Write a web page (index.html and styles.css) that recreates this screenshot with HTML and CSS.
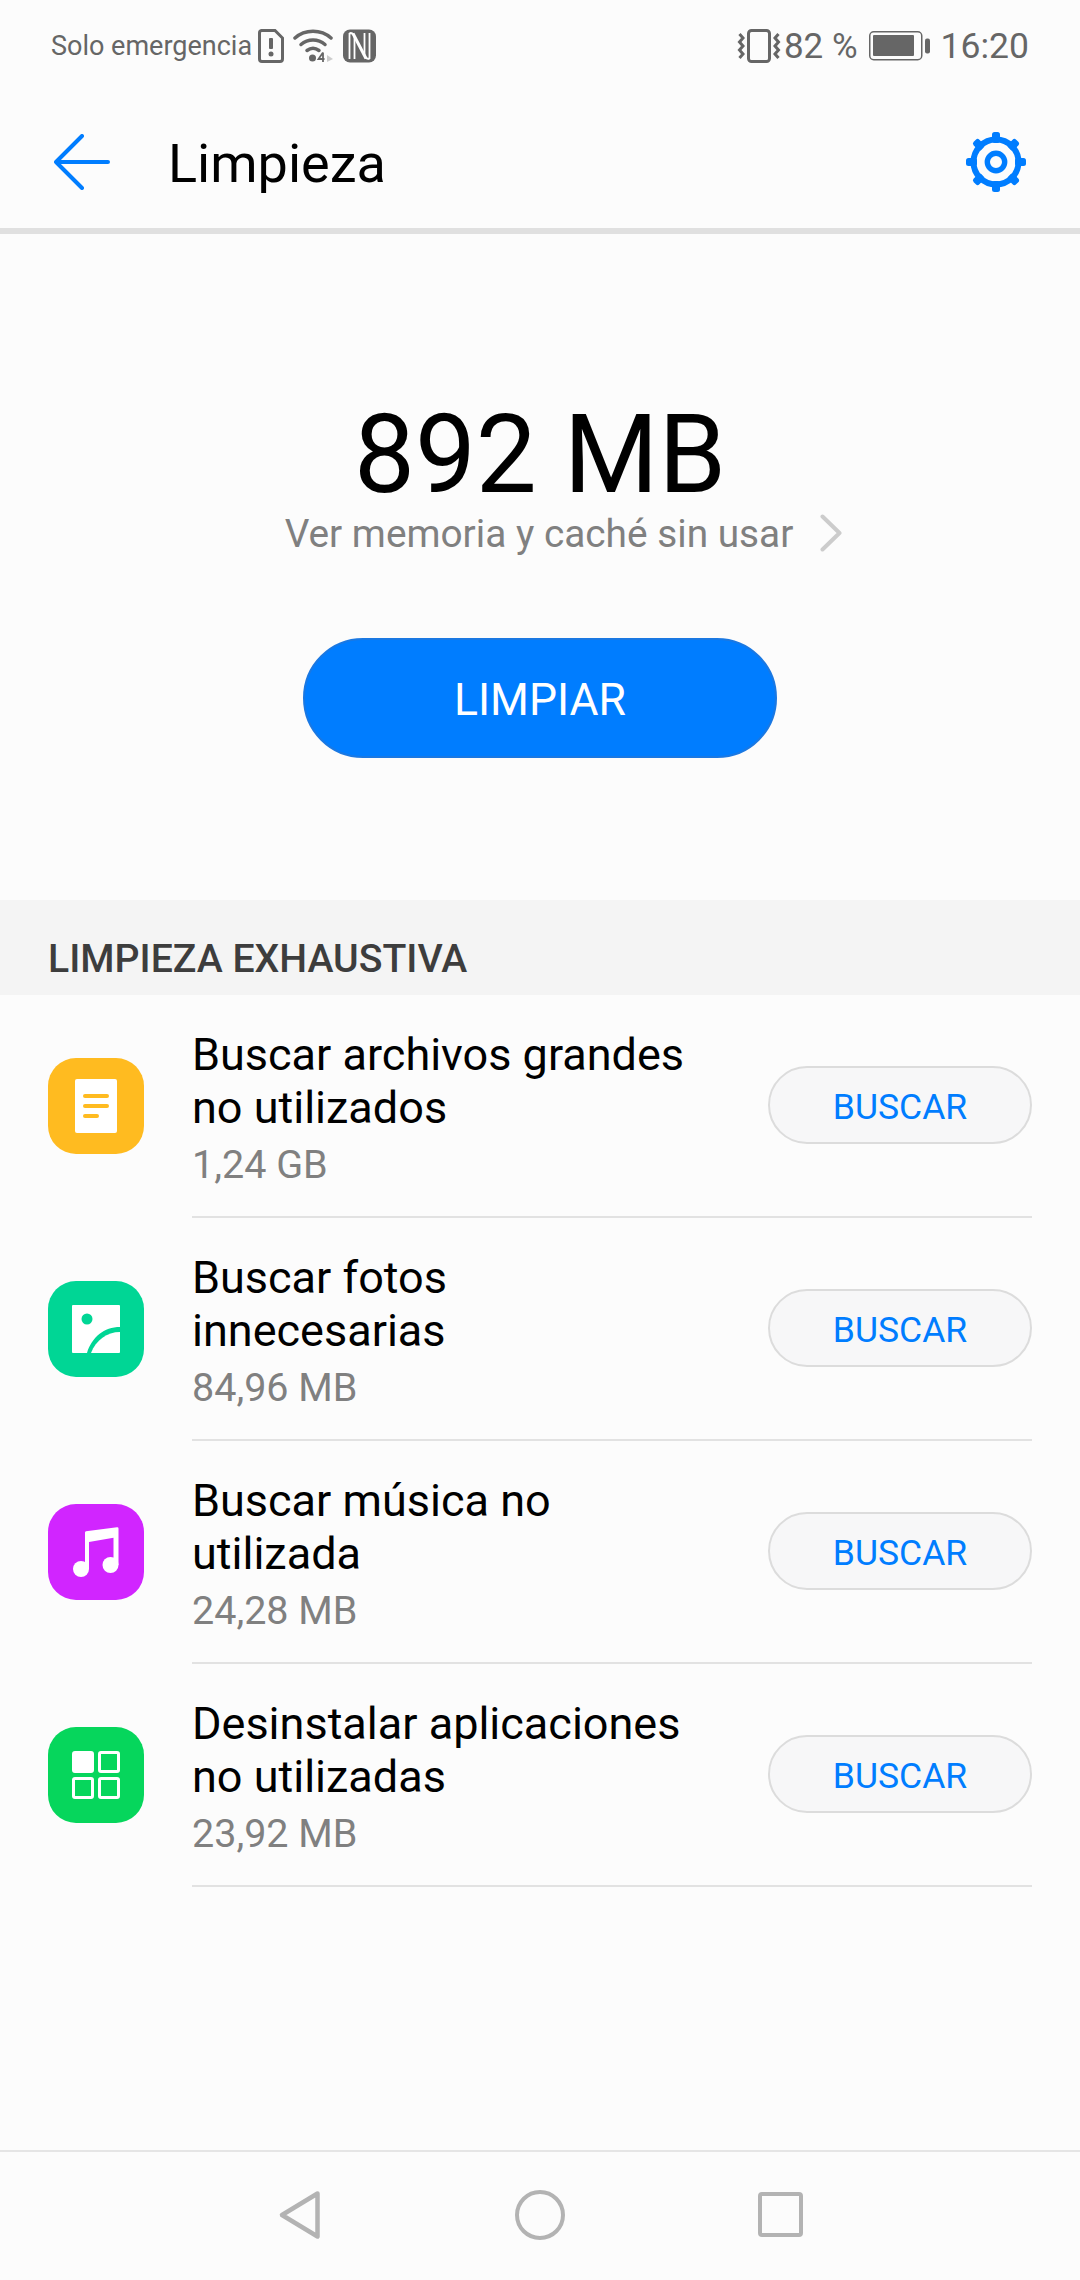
FILE: index.html
```html
<!DOCTYPE html>
<html lang="es">
<head>
    <meta charset="UTF-8">
    <meta name="viewport" content="width=device-width, initial-scale=1.0">
    <title>Limpieza</title>
    <link rel="stylesheet" href="styles.css">
</head>
<body>
    <div class="phone">
        <div class="status-bar">
            <div class="status-left">
                <span class="carrier">Solo emergencia</span>
                <svg class="ic-sim" width="26" height="34" viewBox="0 0 26 34"><path d="M3.500 1.500H17L24.500 9V30a2.500 2.500 0 0 1-2.500 2.500H4A2.500 2.500 0 0 1 1.500 30V4A2.500 2.500 0 0 1 3.500 1.500Z" fill="none" stroke="#666" stroke-width="3"/><rect x="11" y="9" width="4" height="11" rx="1" fill="#666"/><circle cx="13" cy="25" r="2.500" fill="#666"/></svg>
                <svg class="ic-wifi" width="40" height="34" viewBox="0 0 40 34"><path d="M2 9C12 0 28 0 38 9" fill="none" stroke="#666" stroke-width="3.500" stroke-linecap="round"/><path d="M8 15.500C15 9.500 25 9.500 32 15.500" fill="none" stroke="#666" stroke-width="3.500" stroke-linecap="round"/><path d="M14 21.500C18 18.500 22 18.500 26 21.500" fill="none" stroke="#666" stroke-width="3.500" stroke-linecap="round"/><circle cx="19.500" cy="29" r="3.500" fill="#666"/><path d="M30 23.500V33M30 23.500L25.500 30H31.500" fill="none" stroke="#666" stroke-width="1.800"/><path d="M34 26L40 30L34 33Z" fill="#ccc"/></svg>
                <svg class="ic-nfc" width="33" height="34" viewBox="0 0 33 34"><rect x="0" y="0.500" width="33" height="33" rx="7" fill="#666"/><path d="M6.500 4V30M6.500 4C10 4 11.500 5.500 11.500 9V30" fill="none" stroke="#fff" stroke-width="1.800"/><path d="M10 4.500L23 29.500" stroke="#fff" stroke-width="3" fill="none"/><path d="M26.500 4V30M26.500 30C23 30 21.500 28.500 21.500 25V4" fill="none" stroke="#fff" stroke-width="1.800"/></svg>
            </div>
            <div class="status-right">
                <svg class="ic-vibrate" width="44" height="34" viewBox="0 0 44 34"><rect x="11.500" y="1.500" width="21" height="31" rx="3" fill="none" stroke="#666" stroke-width="3"/><path d="M2.500 5L6 9L2.500 13L6 17L2.500 21L6 25L2.500 29" fill="none" stroke="#666" stroke-width="3"/><path d="M41.500 5L38 9L41.500 13L38 17L41.500 21L38 25L41.500 29" fill="none" stroke="#666" stroke-width="3"/></svg>
                <span class="battery-text">82 %</span>
                <svg class="ic-battery" width="61" height="30" viewBox="0 0 61 30"><rect x="0.750" y="0.750" width="52" height="28" rx="4" fill="none" stroke="#666" stroke-width="1.500"/><rect x="4" y="4" width="41" height="21" rx="1" fill="#666"/><rect x="56" y="7.500" width="5" height="15" rx="2" fill="#666"/></svg>
                <span class="clock">16:20</span>
            </div>
        </div>

        <header class="toolbar">
            <svg class="ic-back" width="56" height="56" viewBox="0 0 56 56"><path d="M28 2L2 28L28 54M2 28H54" fill="none" stroke="#007dff" stroke-width="4" stroke-linecap="round" stroke-linejoin="round"/></svg>
            <h1 class="toolbar-title">Limpieza</h1>
            <svg class="ic-gear" width="60" height="60" viewBox="0 0 60 60">
                <g fill="#007dff">
                    <rect x="26" y="0" width="8" height="11" rx="2.500"/>
                    <rect x="26" y="0" width="8" height="11" rx="2.500" transform="rotate(45 30 30)"/>
                    <rect x="26" y="0" width="8" height="11" rx="2.500" transform="rotate(90 30 30)"/>
                    <rect x="26" y="0" width="8" height="11" rx="2.500" transform="rotate(135 30 30)"/>
                    <rect x="26" y="0" width="8" height="11" rx="2.500" transform="rotate(180 30 30)"/>
                    <rect x="26" y="0" width="8" height="11" rx="2.500" transform="rotate(225 30 30)"/>
                    <rect x="26" y="0" width="8" height="11" rx="2.500" transform="rotate(270 30 30)"/>
                    <rect x="26" y="0" width="8" height="11" rx="2.500" transform="rotate(315 30 30)"/>
                </g>
                <circle cx="30" cy="30" r="22.500" fill="none" stroke="#007dff" stroke-width="6"/>
                <circle cx="30" cy="30" r="8.700" fill="none" stroke="#007dff" stroke-width="5.400"/>
            </svg>
        </header>

        <section class="summary">
            <div class="summary-size">892 MB</div>
            <div class="summary-link">
                <span>Ver memoria y caché sin usar</span>
                <svg width="22" height="38" viewBox="0 0 22 38"><path d="M2.500 2.500L19.500 19L2.500 35.500" fill="none" stroke="#ccc" stroke-width="4" stroke-linecap="round" stroke-linejoin="round"/></svg>
            </div>
            <button class="btn-clean">LIMPIAR</button>
        </section>

        <div class="section-head">LIMPIEZA EXHAUSTIVA</div>

        <ul class="deep-list">
            <li class="deep-item">
                <span class="app-icon app-icon-yellow">
                    <svg width="42" height="54" viewBox="0 0 42 54"><rect width="42" height="54" rx="2" fill="#fff"/><g fill="#ffbb20"><rect x="8" y="15" width="26" height="4" rx="2"/><rect x="8" y="25" width="26" height="4" rx="2"/><rect x="8" y="35" width="16" height="4" rx="2"/></g></svg>
                </span>
                <div class="deep-body">
                    <div class="deep-name">Buscar archivos grandes no utilizados</div>
                    <div class="deep-size">1,24 GB</div>
                </div>
                <button class="btn-find">BUSCAR</button>
            </li>
            <li class="deep-item">
                <span class="app-icon app-icon-teal">
                    <svg width="48" height="48" viewBox="0 0 48 48"><path d="M1 0H47a1 1 0 0 1 1 1V22C32 22 20 32 15 48H1a1 1 0 0 1-1-1V1a1 1 0 0 1 1-1Z" fill="#fff"/><path d="M48 27V47a1 1 0 0 1-1 1H19C24 35 35 27 48 27Z" fill="#fff"/><circle cx="15" cy="14" r="5.500" fill="#00d695"/></svg>
                </span>
                <div class="deep-body">
                    <div class="deep-name">Buscar fotos innecesarias</div>
                    <div class="deep-size">84,96 MB</div>
                </div>
                <button class="btn-find">BUSCAR</button>
            </li>
            <li class="deep-item">
                <span class="app-icon app-icon-purple">
                    <svg width="48" height="50" viewBox="0 0 48 50"><path d="M13 5.500Q13 4.500 14 4.300L45 0.200Q46.500 0 46.500 1.500V38H41.500V10.700L17 15V42H13Z" fill="#fff"/><circle cx="9" cy="42" r="8" fill="#fff"/><circle cx="38.500" cy="38" r="8" fill="#fff"/></svg>
                </span>
                <div class="deep-body">
                    <div class="deep-name">Buscar música no utilizada</div>
                    <div class="deep-size">24,28 MB</div>
                </div>
                <button class="btn-find">BUSCAR</button>
            </li>
            <li class="deep-item">
                <span class="app-icon app-icon-green">
                    <svg width="48" height="48" viewBox="0 0 48 48"><g fill="none" stroke="#fff" stroke-width="3"><rect x="1.500" y="1.500" width="19" height="19" rx="1.500" fill="#fff"/><rect x="27.500" y="1.500" width="19" height="19" rx="1.500"/><rect x="1.500" y="27.500" width="19" height="19" rx="1.500"/><rect x="27.500" y="27.500" width="19" height="19" rx="1.500"/></g></svg>
                </span>
                <div class="deep-body">
                    <div class="deep-name">Desinstalar aplicaciones no utilizadas</div>
                    <div class="deep-size">23,92 MB</div>
                </div>
                <button class="btn-find">BUSCAR</button>
            </li>
        </ul>

        <nav class="nav-bar">
            <svg width="44" height="50" viewBox="0 0 44 50"><path d="M39.500 3.500L4 25L39.500 46.500Z" fill="none" stroke="#b3b3b3" stroke-width="4.500" stroke-linejoin="round"/></svg>
            <svg width="50" height="50" viewBox="0 0 50 50"><circle cx="25" cy="25" r="23" fill="none" stroke="#b3b3b3" stroke-width="4"/></svg>
            <svg width="45" height="45" viewBox="0 0 45 45"><rect x="2" y="2" width="41" height="41" rx="2" fill="none" stroke="#b3b3b3" stroke-width="4"/></svg>
        </nav>
    </div>
</body>
</html>
```

FILE: styles.css
```css
* {
    box-sizing: border-box;
}

html, body {
    margin: 0;
    padding: 0;
}

body {
    font-family: Roboto, "Noto Sans", sans-serif;
    background: #fcfcfc;
    color: #000;
}

.phone {
    display: flex;
    flex-direction: column;
    width: 1080px;
    height: 2280px;
    overflow: hidden;
    background: #fcfcfc;
}

.status-bar {
    display: flex;
    justify-content: space-between;
    align-items: center;
    height: 92px;
    padding: 0 51px;
    color: #666;
}

.status-left, .status-right {
    display: flex;
    align-items: center;
}

.carrier {
    font-size: 27px;
    margin-right: 6px;
}

.ic-sim {
    margin-right: 9px;
}

.ic-nfc {
    margin-left: 10px;
}

.battery-text {
    font-size: 35px;
    margin-left: 3px;
    margin-right: 11px;
}

.clock {
    font-size: 35.5px;
    margin-left: 11px;
}

.toolbar {
    display: flex;
    align-items: center;
    height: 142px;
    padding: 4px 54px 0;
    border-bottom: 6px solid #e0e0e0;
}

.toolbar-title {
    flex: 1;
    margin: 2px 0 0 58px;
    font-size: 54px;
    font-weight: 400;
}

.summary {
    display: flex;
    flex-direction: column;
    align-items: center;
    height: 666px;
    padding-top: 169px;
}

.summary-size {
    font-size: 108.5px;
    line-height: 104px;
}

.summary-link {
    display: flex;
    align-items: center;
    height: 52px;
    margin-left: 47px;
    color: #808080;
    font-size: 38.8px;
}

.summary-link svg {
    margin-left: 27px;
}

.btn-clean {
    width: 474px;
    height: 120px;
    margin-top: 79px;
    padding: 3px 0 0;
    border: 2px solid #1a78e2;
    border-radius: 60px;
    background: #007dff;
    color: #fff;
    font-family: inherit;
    font-size: 44.5px;
}

.section-head {
    display: flex;
    align-items: flex-end;
    height: 95px;
    padding: 0 48px 13px;
    background: #f4f4f4;
    color: #3d3d3d;
    font-size: 39.2px;
    font-weight: 500;
}

.deep-list {
    list-style: none;
    margin: 0;
    padding: 0;
}

.deep-item {
    position: relative;
    display: flex;
    align-items: center;
    height: 223px;
    padding-right: 48px;
}

.deep-item::after {
    content: "";
    position: absolute;
    left: 192px;
    right: 48px;
    bottom: 0;
    border-bottom: 2px solid #e2e2e2;
}

.app-icon {
    display: flex;
    flex-shrink: 0;
    justify-content: center;
    align-items: center;
    width: 96px;
    height: 96px;
    margin: -2px 48px 0;
    border-radius: 28px;
}

.app-icon-yellow { background: #ffbb20; }
.app-icon-teal { background: #00d695; }
.app-icon-purple { background: #d125ff; }
.app-icon-green { background: #06d65c; }

.deep-body {
    flex: 1;
    align-self: stretch;
    display: flex;
    flex-direction: column;
    justify-content: center;
    min-width: 0;
    padding-top: 4px;
}

.deep-name {
    max-width: 500px;
    font-size: 45px;
    line-height: 53px;
}

.deep-size {
    margin-top: 6px;
    color: #808080;
    font-size: 39.5px;
    line-height: 50px;
}

.btn-find {
    flex-shrink: 0;
    width: 264px;
    height: 78px;
    margin-top: -3px;
    padding: 3px 0 0;
    border: 2px solid #dcdcdc;
    border-radius: 39px;
    background: #f7f7f8;
    color: #007dff;
    font-family: inherit;
    font-size: 35.5px;
}

.nav-bar {
    display: flex;
    justify-content: center;
    align-items: center;
    gap: 193px;
    height: 130px;
    margin-top: auto;
    padding-bottom: 3px;
    border-top: 2px solid #e5e5e5;
}
```
